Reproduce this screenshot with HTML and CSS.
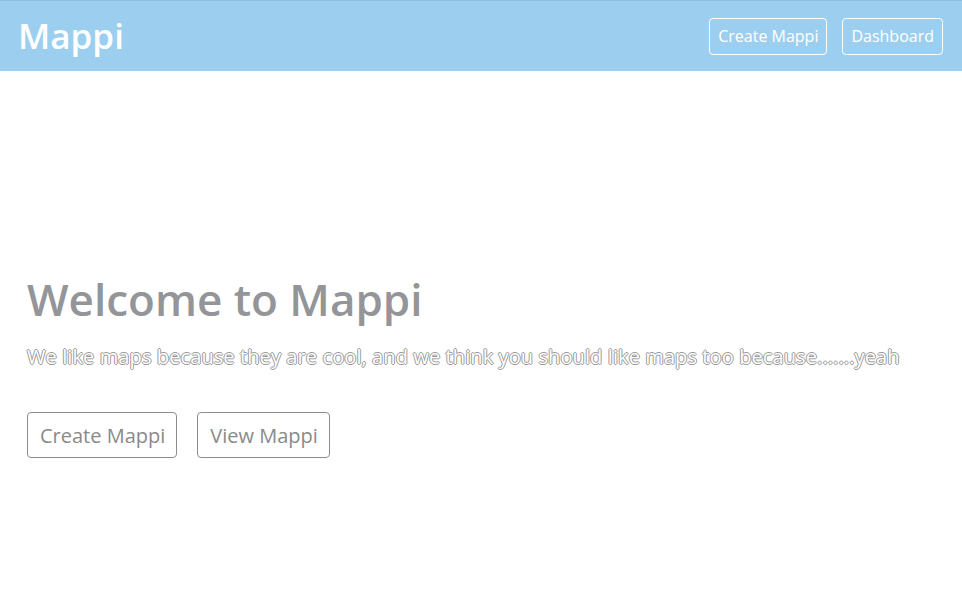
FILE: index.html
```html
<!DOCTYPE html>
<html>
<head>
<meta charset="utf-8">
<link rel="stylesheet" href="styles.css">
</head>
<body>
<nav class="navbar">
  <a class="brand">Mappi</a>
  <div class="nav-links">
    <a class="nav-btn">Create Mappi</a>
    <a class="nav-btn">Dashboard</a>
  </div>
</nav>
<main class="hero">
  <h1 class="title">Welcome to Mappi</h1>
  <p class="lead">We like maps because they are cool, and we think you should like maps too because.......yeah</p>
  <div class="actions">
    <a class="btn">Create Mappi</a>
    <a class="btn">View Mappi</a>
  </div>
</main>
</body>
</html>
```
FILE: styles.css
```css
html, body {
  margin: 0;
  padding: 0;
  background: #fff;
  font-family: "Open Sans", "DejaVu Sans", sans-serif;
}
.navbar {
  height: 71px;
  background: #9ccfef;
  display: flex;
  align-items: center;
  justify-content: space-between;
  padding: 0 19px 0 18px;
  box-sizing: border-box;
  border-top: 1px solid #8fbfdd;
}
.brand {
  color: #fff;
  font-size: 35px;
  font-weight: 600;
  line-height: 1;
  margin-top: -2px;
}
.nav-links {
  display: flex;
  gap: 15px;
}
.nav-btn {
  color: #fff;
  font-size: 16px;
  border: 1px solid #fff;
  border-radius: 4px;
  height: 37px;
  box-sizing: border-box;
  padding: 0 8px;
  display: flex;
  align-items: center;
}
.hero {
  padding: 199px 27px 0;
}
.title {
  margin: 0;
  font-size: 44px;
  font-weight: 600;
  color: #939598;
  line-height: 58px;
}
.lead {
  margin: 16px 0 0;
  font-size: 20px;
  letter-spacing: 0.1px;
  font-weight: 400;
  color: #fff;
  text-shadow: 1px 0 0 #9a9a9a, -1px 0 0 #9a9a9a, 0 1px 0 #9a9a9a, 0 -1px 0 #9a9a9a;
  line-height: 26px;
}
.actions {
  display: flex;
  gap: 20px;
  margin-top: 42px;
}
.btn {
  color: #8a8a8a;
  font-size: 20px;
  border: 1px solid #8d8d8d;
  border-radius: 4px;
  height: 46px;
  box-sizing: border-box;
  padding: 0 11px 0 12px;
  display: flex;
  align-items: center;
}
```
